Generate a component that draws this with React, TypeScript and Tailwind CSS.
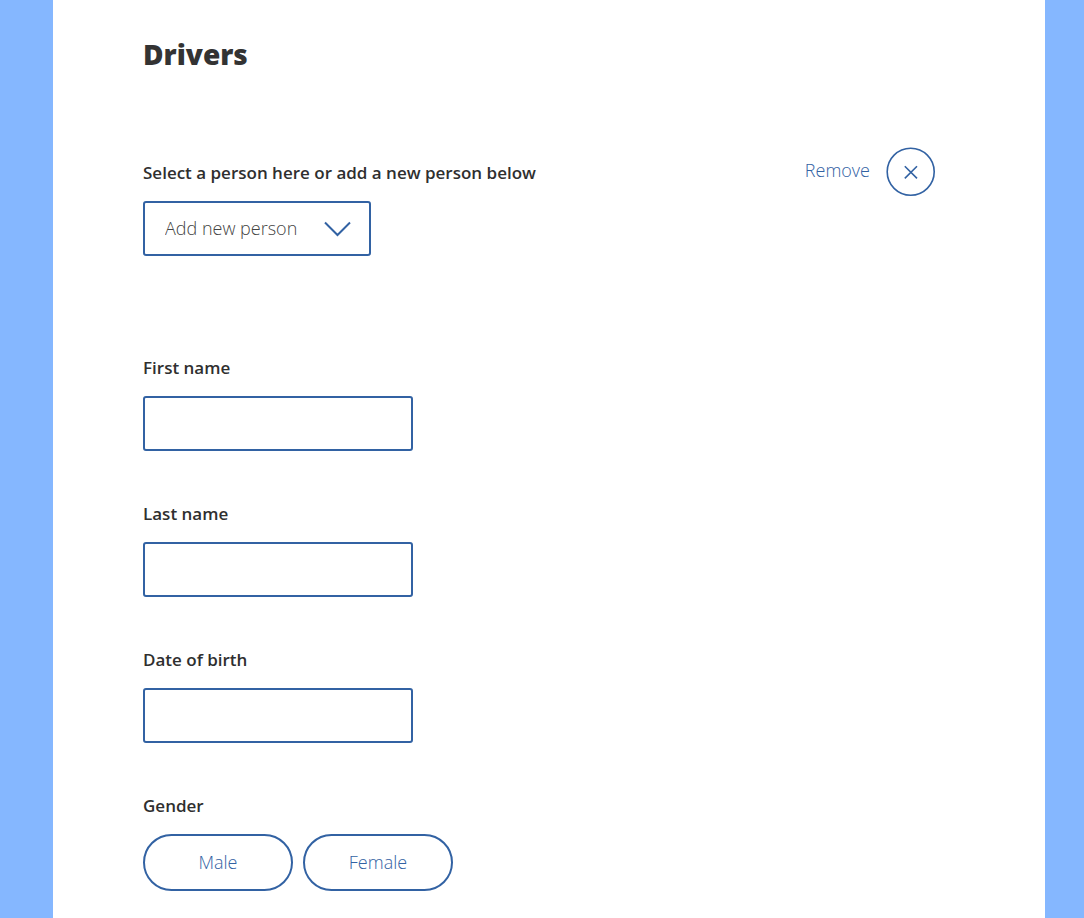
import React, { useState } from 'react';

interface TextFieldProps {
  id: string;
  label: string;
}

const labelClass = 'block text-[17px] leading-6 font-semibold text-[#2f2f2f]';

const TextField: React.FC<TextFieldProps> = ({ id, label }) => (
  <div className="mb-[51px]">
    <label htmlFor={id} className={labelClass}>{label}</label>
    <input
      id={id}
      type="text"
      className="mt-4 block h-[55px] w-[270px] max-w-full rounded-[3px] border-2 border-[#3262a3] bg-white px-5 text-lg text-[#555555] outline-none"
    />
  </div>
);

const genders = ['Male', 'Female'];

const App: React.FC = () => {
  const [gender, setGender] = useState('');

  return (
    <div className="min-h-screen bg-[#85b7ff] pr-[39px] pl-[53px] font-['Open_Sans',sans-serif]">
      <main className="min-h-screen bg-white px-[90px] pt-9 pb-7">
        <h1 className="text-[28px] leading-9 font-extrabold text-[#333333]">Drivers</h1>

        <div className="mt-[75px] mb-[100px] flex items-start justify-between pr-5">
          <div className="pt-3.5">
            <label htmlFor="person" className={labelClass}>
              Select a person here or add a new person below
            </label>
            <div className="relative mt-4 w-[228px]">
              <select
                id="person"
                className="block h-[55px] w-full appearance-none rounded-[3px] border-2 border-[#3262a3] bg-white pb-0.5 pl-5 text-lg font-light text-[#444444] outline-none"
              >
                <option>Add new person</option>
              </select>
              <svg
                className="pointer-events-none absolute top-5 right-5 h-4 w-[27px]"
                viewBox="0 0 27 16"
                fill="none"
                stroke="#3262a3"
                strokeWidth="2"
              >
                <path d="M1 1.5l12.5 12.5L26 1.5" />
              </svg>
            </div>
          </div>

          <button type="button" className="flex items-center gap-4 text-lg font-light text-[#3262a3]">
            <span className="pb-1">Remove</span>
            <svg className="size-[49px]" viewBox="0 0 49 49" fill="none" stroke="#3262a3" strokeWidth="1.6">
              <circle cx="24.7" cy="24.7" r="23.5" />
              <path d="M18.8 19.2l12.2 12.2M31 19.2L18.8 31.4" />
            </svg>
          </button>
        </div>

        <TextField id="first-name" label="First name" />
        <TextField id="last-name" label="Last name" />
        <TextField id="birth-date" label="Date of birth" />

        <div role="group" aria-labelledby="gender-label">
          <p id="gender-label" className={labelClass}>Gender</p>
          <div className="mt-4 flex gap-2.5">
            {genders.map((item) => (
              <button
                key={item}
                type="button"
                aria-pressed={gender === item}
                onClick={() => setGender(item)}
                className="h-[57px] w-[150px] rounded-full border-2 border-[#3262a3] bg-white pb-0.5 text-lg font-light text-[#3262a3]"
              >
                {item}
              </button>
            ))}
          </div>
        </div>
      </main>
    </div>
  );
};

export default App;
